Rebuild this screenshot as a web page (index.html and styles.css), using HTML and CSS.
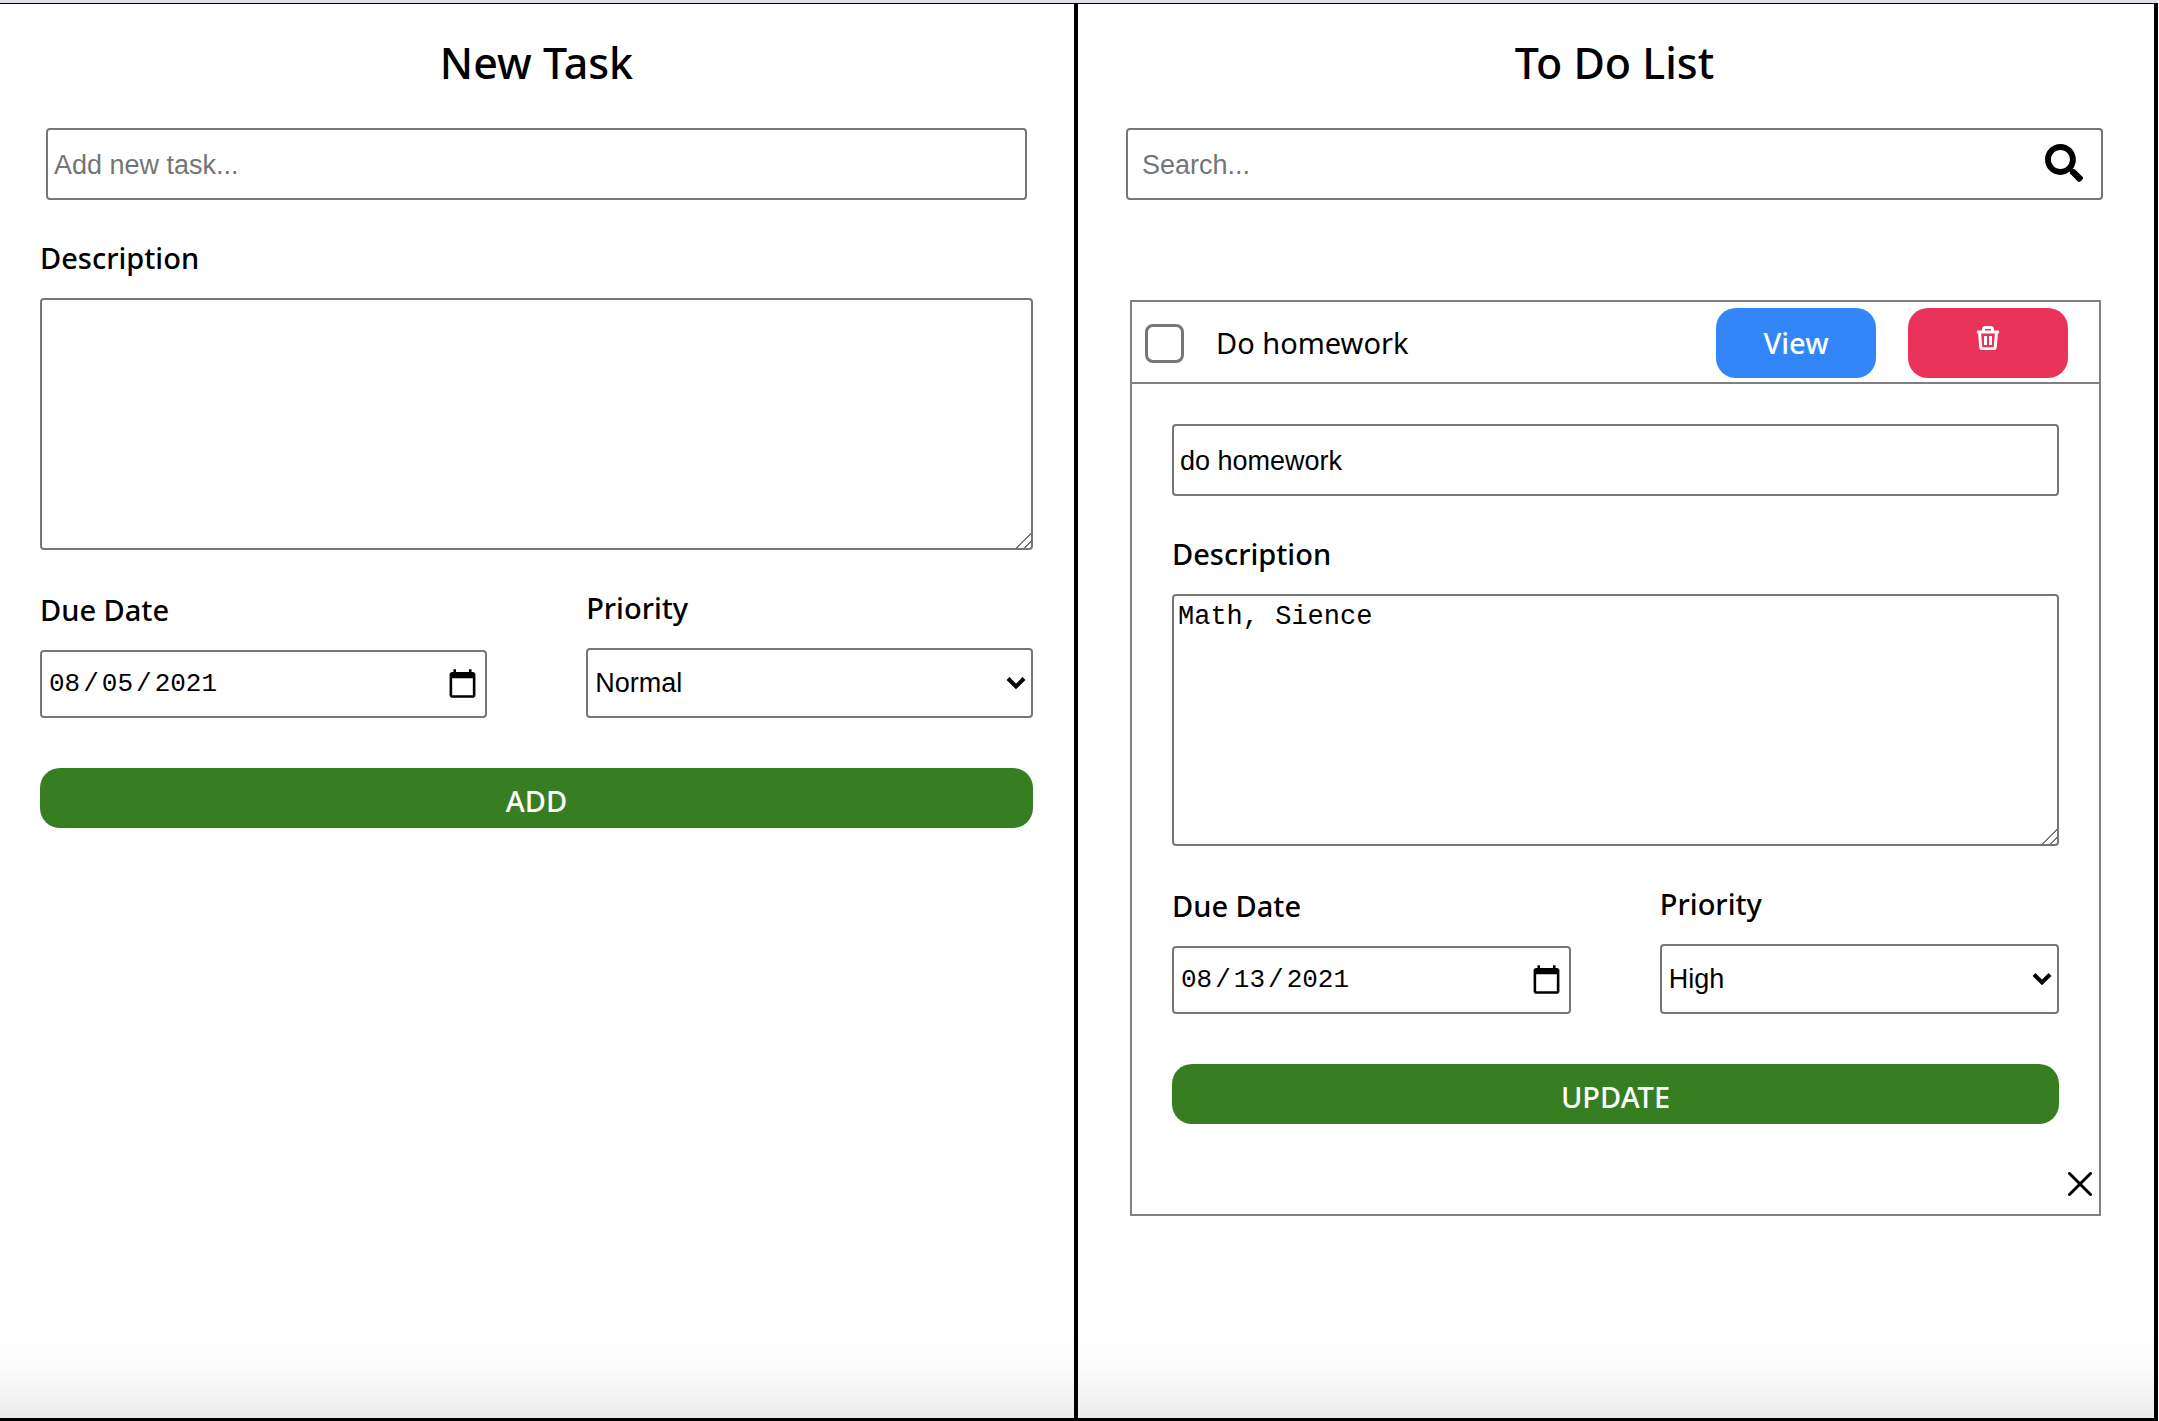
FILE: index.html
```html
<!DOCTYPE html>
<html lang="en-US">
<head>
<meta charset="utf-8">
<title>To Do List</title>
<link rel="stylesheet" href="styles.css">
</head>
<body>
<div class="app">
  <section class="panel panel-new">
    <h1 class="title">New Task</h1>
    <form class="form">
      <input class="control text inset" type="text" placeholder="Add new task..." aria-label="New task">
      <div class="field">
        <label for="new-desc">Description</label>
        <textarea class="control area" id="new-desc"></textarea>
      </div>
      <div class="row">
        <div class="field half">
          <label for="new-date">Due Date</label>
          <input class="control date" id="new-date" type="date" value="2021-08-05">
        </div>
        <div class="field half">
          <label for="new-priority">Priority</label>
          <div class="select">
            <select class="control" id="new-priority"><option>Low</option><option selected>Normal</option><option>High</option></select>
            <svg class="chevron" viewBox="0 0 20 14" aria-hidden="true"><path d="M2 2.5l8 8 8-8"/></svg>
          </div>
        </div>
      </div>
      <button class="submit" type="button">ADD</button>
    </form>
  </section>
  <section class="panel panel-list">
    <h2 class="title">To Do List</h2>
    <div class="search">
      <input class="control text" type="text" placeholder="Search..." aria-label="Search">
      <svg class="search-icon" viewBox="0 0 512 512" aria-hidden="true"><path d="M505 442.700L405.300 343c-4.500-4.500-10.600-7-17-7H372c27.600-35.300 44-79.700 44-128C416 93.100 322.900 0 208 0S0 93.100 0 208s93.100 208 208 208c48.300 0 92.700-16.400 128-44v16.300c0 6.400 2.500 12.500 7 17l99.700 99.700c9.400 9.400 24.600 9.400 33.900 0l28.300-28.300c9.400-9.400 9.400-24.600.1-34zM208 336c-70.700 0-128-57.200-128-128 0-70.700 57.200-128 128-128 70.700 0 128 57.200 128 128 0 70.700-57.200 128-128 128z"/></svg>
    </div>
    <article class="card">
      <header class="card-head">
        <input class="check" type="checkbox" id="task-1">
        <label class="task" for="task-1">Do homework</label>
        <button class="pill view" type="button">View</button>
        <button class="pill delete" type="button" aria-label="Delete">
          <svg viewBox="0 0 22 24" aria-hidden="true"><path d="M0 6h22M6.500 5.500V3.500q0-2 2-2h5q2 0 2 2v2M2.500 6l1.200 15q.2 1.800 2 1.800h10.600q1.800 0 2-1.800l1.200-15M8.500 10v9M13.500 10v9"/></svg>
        </button>
      </header>
      <form class="form card-form">
        <input class="control text" type="text" value="do homework" aria-label="Task">
        <div class="field">
          <label for="edit-desc">Description</label>
          <textarea class="control area" id="edit-desc">Math, Sience</textarea>
        </div>
        <div class="row">
          <div class="field half">
            <label for="edit-date">Due Date</label>
            <input class="control date" id="edit-date" type="date" value="2021-08-13">
          </div>
          <div class="field half">
            <label for="edit-priority">Priority</label>
            <div class="select">
              <select class="control" id="edit-priority"><option>Low</option><option>Normal</option><option selected>High</option></select>
              <svg class="chevron" viewBox="0 0 20 14" aria-hidden="true"><path d="M2 2.5l8 8 8-8"/></svg>
            </div>
          </div>
        </div>
        <button class="submit" type="button">UPDATE</button>
      </form>
      <button class="close" type="button" aria-label="Close">
        <svg viewBox="0 0 24 24" aria-hidden="true"><path d="M1.500 1.500l21 21M22.500 1.500l-21 21"/></svg>
      </button>
    </article>
  </section>
</div>
</body>
</html>
```
FILE: styles.css
```css
* {
  box-sizing: border-box;
}

body {
  margin: 0;
  background: #fff;
  color: #000;
  font-family: "Noto Sans", "Open Sans", sans-serif;
  font-size: 29px;
  line-height: 40px;
}

.app {
  display: grid;
  grid-template-columns: calc(50% - 3px) 1fr;
  min-height: 100vh;
  margin-right: 1px;
  border-top: 3px solid #e0dee6;
}

.panel {
  padding-top: 29px;
  border: 0 solid #000;
  border-top-width: 1px;
  border-bottom-width: 3px;
  background: linear-gradient(to top, #ececec, #f4f4f4 25px, #fbfbfb 50px, #fff 90px);
}

.panel-new {
  padding-left: 40px;
  padding-right: 41px;
  border-right-width: 2px;
}

.panel-list {
  padding-left: 48px;
  padding-right: 51px;
  border-left-width: 2px;
  border-right-width: 4px;
}

.title {
  margin: 0 0 35px;
  font-size: 43px;
  line-height: 60px;
  font-weight: 500;
  text-align: center;
}

.form {
  display: flex;
  flex-direction: column;
}

.field {
  display: flex;
  flex-direction: column;
  gap: 20px;
  margin-top: 38px;
  font-weight: 500;
}

.row {
  display: flex;
  justify-content: space-between;
  align-items: flex-end;
}

.half {
  width: 45%;
}

.control {
  width: 100%;
  margin: 0;
  border: 2px solid #767676;
  border-radius: 4px;
  background: #fff;
  color: #000;
  font: 27px "Liberation Sans", Arial, sans-serif;
}

.control::placeholder {
  color: #757575;
}

.text {
  height: 72px;
  padding: 4px 6px 2px;
}

.inset {
  width: auto;
  margin: 0 6px;
}

.area {
  height: 252px;
  padding: 6px 4px;
  font-family: "Liberation Mono", "Courier New", monospace;
  resize: vertical;
}

.area::-webkit-resizer {
  background: linear-gradient(135deg, transparent 49%, #767676 49%, #767676 55%, transparent 55%, transparent 75%, #767676 75%, #767676 81%, transparent 81%);
}

.date {
  height: 68px;
  padding: 2px 6px;
  font-family: "Liberation Mono", "Courier New", monospace;
  font-size: 26px;
}

.date::-webkit-datetime-edit-fields-wrapper {
  padding: 0;
}

.date::-webkit-datetime-edit-text {
  padding: 0 2px;
}

.date::-webkit-calendar-picker-indicator {
  width: 33px;
  height: 33px;
  padding: 0;
}

.select {
  position: relative;
}

.select .control {
  display: block;
  height: 70px;
  padding: 0 7px;
  appearance: none;
}

.chevron {
  position: absolute;
  right: 7px;
  top: 28px;
  width: 20px;
  height: 14px;
  fill: none;
  stroke: #000;
  stroke-width: 4;
  pointer-events: none;
}

button {
  border: 0;
  padding: 0;
  color: #fff;
  font: inherit;
  cursor: pointer;
}

.submit {
  height: 60px;
  margin-top: 50px;
  padding-top: 6px;
  border-radius: 20px;
  background: #377e22;
  font-weight: 500;
}

.search {
  position: relative;
}

.search .text {
  display: block;
  padding-left: 14px;
  padding-right: 60px;
}

.search-icon {
  position: absolute;
  right: 20px;
  top: 16px;
  width: 38px;
  height: 38px;
}

.card {
  display: flex;
  flex-direction: column;
  margin: 100px 2px 0 4px;
  border: 2px solid #808080;
}

.card-head {
  display: flex;
  align-items: center;
  gap: 32px;
  height: 82px;
  padding: 2px 31px 0 13px;
  border-bottom: 2px solid #808080;
}

.check {
  width: 39px;
  height: 39px;
  margin: 0;
  border: 3px solid #767676;
  border-radius: 8px;
  background: #fff;
  appearance: none;
}

.task {
  flex: 1;
}

.pill {
  width: 160px;
  height: 70px;
  border-radius: 20px;
}

.view {
  background: #3286f7;
  font-weight: 500;
}

.delete {
  display: flex;
  justify-content: center;
  padding-top: 18px;
  background: #ea3359;
}

.delete svg {
  width: 22px;
  height: 24px;
  fill: none;
  stroke: #fff;
  stroke-width: 3;
}

.card-form {
  padding: 40px 40px 0;
}

.close {
  align-self: flex-end;
  display: flex;
  margin: 48px 7px 18px;
  background: none;
}

.close svg {
  width: 24px;
  height: 24px;
  fill: none;
  stroke: #000;
  stroke-width: 3;
  stroke-linecap: round;
}
```
